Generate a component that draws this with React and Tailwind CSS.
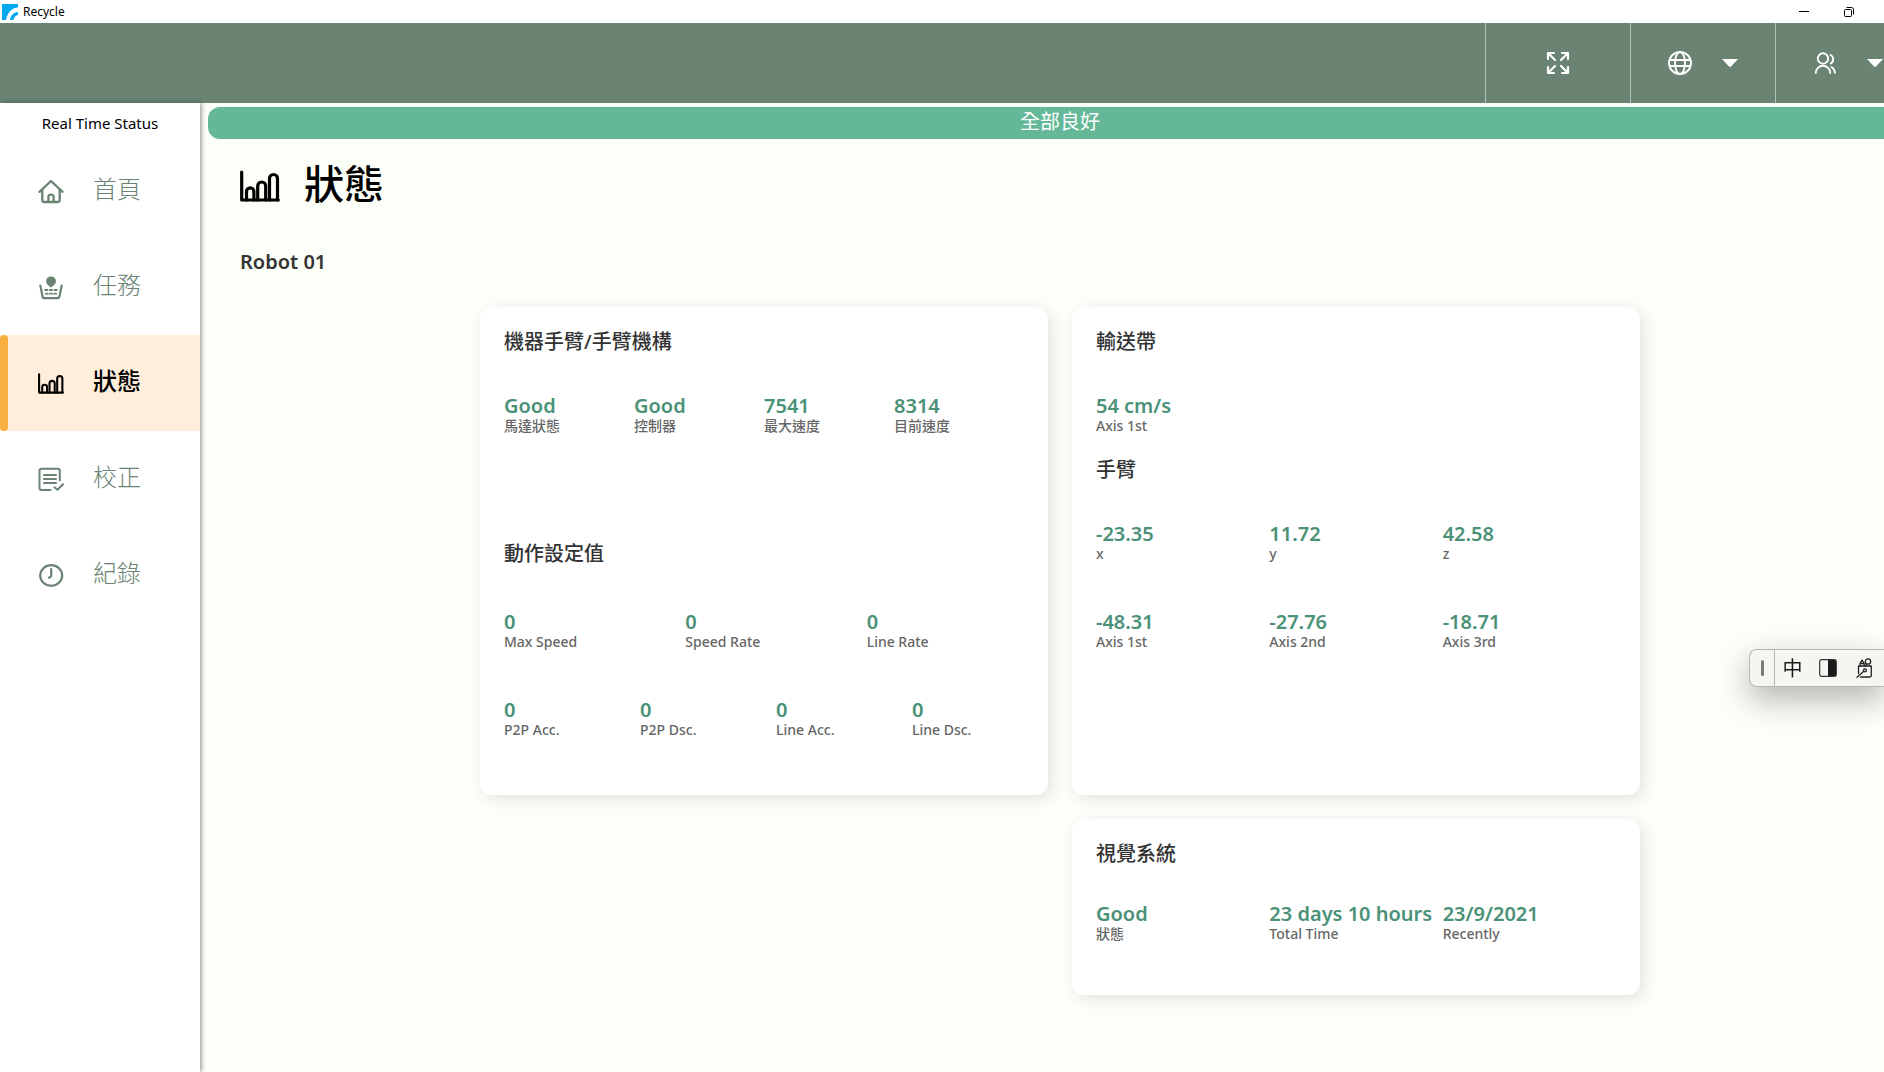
import React from "react";

const NAV = [
  { label: "首頁", icon: HomeIcon },
  { label: "任務", icon: TaskIcon },
  { label: "狀態", icon: ChartIcon, active: true },
  { label: "校正", icon: CalibrateIcon },
  { label: "紀錄", icon: ClockIcon },
];

function HomeIcon() {
  return (
    <svg viewBox="0 0 26 26" className="size-[26px]" fill="none" stroke="currentColor" strokeWidth="2.3" strokeLinecap="round" strokeLinejoin="round" aria-hidden="true">
      <path d="M1.500 13.800 13 3l11.500 10.800" />
      <path d="M4.300 12v10a2 2 0 0 0 2 2h13.400a2 2 0 0 0 2-2V12" />
      <path d="M10.400 23.500v-4.300a2.600 2.600 0 0 1 5.200 0V23.500" />
    </svg>
  );
}

function TaskIcon() {
  return (
    <svg viewBox="0 0 26 26" className="size-[26px]" fill="none" stroke="currentColor" strokeWidth="2.200" strokeLinecap="round" strokeLinejoin="round" aria-hidden="true">
      <path d="M2.300 11.500 4.600 22.500a2 2 0 0 0 2 1.700h12.800a2 2 0 0 0 2-1.700l2.300-11" />
      <path d="M13 13.800c-1.500-2-4.900-3.200-4.900-6.500a4.900 4.900 0 0 1 9.800 0c0 3.300-3.400 4.500-4.900 6.500z" fill="currentColor" stroke="none" />
      <path d="M7.200 16h2.300M11.900 16h2.200M16.500 16h2.300M7.800 19.700h2M12 19.700h2M16.200 19.700h2" strokeWidth="1.800" />
    </svg>
  );
}

function ChartIcon({ large = false }) {
  return (
    <svg viewBox="0 0 40 32" className={large ? "mt-1 h-8 w-10" : "h-[21px] w-[26px]"} fill="none" stroke="currentColor" strokeWidth="3.200" strokeLinecap="round" strokeLinejoin="round" aria-hidden="true">
      <path d="M1.700 2V30H38.300" />
      <path d="M6.500 30v-8.500a3.700 3.700 0 0 1 7.400 0V30" />
      <path d="M17.700 30V16a4 4 0 0 1 8 0V30" />
      <path d="M29.500 30V8.500a4 4 0 0 1 8 0V30" />
    </svg>
  );
}

function CalibrateIcon() {
  return (
    <svg viewBox="0 0 26 26" className="size-[26px]" fill="none" stroke="currentColor" strokeWidth="2" strokeLinecap="round" strokeLinejoin="round" aria-hidden="true">
      <path d="M12.500 24H3.500a2 2 0 0 1-2-2V4.700a2 2 0 0 1 2-2h16.300a2 2 0 0 1 2 2v9.500" />
      <path d="M6 9h12M6 13h12M6 17h12" strokeWidth="2.100" />
      <path d="m16.500 21.300 3 2.500 5.500-5.500" />
    </svg>
  );
}

function ClockIcon() {
  return (
    <svg viewBox="0 0 26 26" className="size-[26px]" fill="none" stroke="currentColor" strokeWidth="2.200" strokeLinecap="round" strokeLinejoin="round" aria-hidden="true">
      <ellipse cx="13.200" cy="13.500" rx="11" ry="10.300" />
      <path d="M13.200 7v6.500c0 1-1 1.800-2.400 2.200" />
    </svg>
  );
}

function ExpandIcon() {
  return (
    <svg viewBox="0 0 24 24" className="size-6" fill="none" stroke="currentColor" strokeWidth="2.200" strokeLinecap="round" strokeLinejoin="round" aria-hidden="true">
      <path d="M2 8V2h6M2.500 2.500 9 9M16 2h6v6M21.500 2.500 15 9M2 16v6h6M2.500 21.500 9 15M22 16v6h-6M21.500 21.500 15 15" />
    </svg>
  );
}

function GlobeIcon() {
  return (
    <svg viewBox="0 0 24 24" className="size-6" fill="none" stroke="currentColor" strokeWidth="1.900" aria-hidden="true">
      <circle cx="12" cy="12" r="11" />
      <ellipse cx="12" cy="12" rx="5" ry="11" />
      <path d="M1.500 9h21M1.500 15h21" />
    </svg>
  );
}

function UsersIcon() {
  return (
    <svg viewBox="0 0 24 24" className="size-6" fill="none" stroke="currentColor" strokeWidth="1.900" strokeLinecap="round" aria-hidden="true">
      <circle cx="10" cy="7.500" r="5.200" />
      <path d="M2.800 22a7.200 7.200 0 0 1 14.400 0M17.500 4a4.800 4.800 0 0 1 .2 8.500M18.500 16c1.900 1.200 3.200 3.200 3.400 5.800" />
    </svg>
  );
}

function Caret() {
  return (
    <svg viewBox="0 0 16 8" className="h-2 w-4" fill="currentColor" aria-hidden="true">
      <path d="M0 0h16L9 7.500q-1 .8-2 0z" />
    </svg>
  );
}

function Stat({ value, label }) {
  return (
    <div className="flex flex-col whitespace-nowrap">
      <dd className="text-xl leading-6 font-semibold text-[#4a9178]">{value}</dd>
      <dt className="order-last text-sm leading-4 font-medium text-[#666666]">{label}</dt>
    </div>
  );
}

function Card({ className = "", children }) {
  return (
    <section className={"rounded-xl bg-white px-6 pt-[23px] shadow-[4px_4px_16px_rgba(0,0,0,0.1)] " + className}>
      {children}
    </section>
  );
}

function CardTitle({ children }) {
  return <h3 className="text-xl leading-6 font-medium text-[#333333]">{children}</h3>;
}

function TitleBar() {
  return (
    <div className="flex h-[23px] items-center bg-white">
      <svg viewBox="0 0 16 16" className="ml-[2px] size-4" aria-hidden="true">
        <path fill="#00a8f0" d="M0 0h16v3.500C9.500 4 5.500 8.500 4 16H0z" />
        <path fill="#00a8f0" d="M8 16c.6-4.500 3.500-7.500 8-8v3c-2.500.4-4 2.200-4.500 5z" />
      </svg>
      <span className="ml-[5px] grow text-xs leading-4 text-black">Recycle</span>
      <button type="button" aria-label="Minimize" className="flex h-full w-[45px] items-center justify-center">
        <span className="h-px w-[10px] bg-black" />
      </button>
      <button type="button" aria-label="Restore" className="mr-[49px] flex h-full w-[45px] items-center justify-center">
        <svg viewBox="0 0 10 10" className="size-[10px]" fill="none" stroke="black" aria-hidden="true">
          <rect x="0.500" y="2.500" width="7" height="7" rx="1" />
          <path d="M2.500.5H7.500a2 2 0 0 1 2 2V7.500" />
        </svg>
      </button>
    </div>
  );
}

function Header() {
  const cell = "flex h-20 w-[145px] items-center border-l border-white/50 text-white";
  return (
    <header className="flex justify-end bg-[#6a8373]">
      <button type="button" aria-label="Full screen" className={cell + " justify-center"}>
        <ExpandIcon />
      </button>
      <button type="button" aria-label="Language" className={cell + " gap-[30px] pl-[37px]"}>
        <GlobeIcon />
        <Caret />
      </button>
      <button type="button" aria-label="Account" className={cell + " gap-[30px] pl-[37px]"}>
        <UsersIcon />
        <Caret />
      </button>
    </header>
  );
}

function Sidebar() {
  return (
    <aside className="z-10 w-[200px] shrink-0 bg-white shadow-[2px_0_4px_rgba(0,0,0,0.35)]">
      <p className="text-center text-[15px] leading-10 text-black">Real Time Status</p>
      <nav>
        {NAV.map(({ label, icon: Icon, active }) => (
          <a
            key={label}
            href="#"
            aria-current={active ? "page" : undefined}
            className={
              "flex h-24 items-center text-2xl " +
              (active ? "bg-[#ffeedc] font-medium text-black" : "font-light text-[#6a8373]")
            }
          >
            <span className={"mr-[30px] h-full w-2 rounded-lg " + (active ? "bg-[#f9ae40]" : "")} />
            <Icon />
            <span className="ml-[29px] pb-1 leading-8">{label}</span>
          </a>
        ))}
      </nav>
    </aside>
  );
}

function InputBar() {
  return (
    <div className="fixed top-[649px] right-0 flex h-[38px] w-[135px] items-center rounded-l-lg border border-r-0 border-[#b4b6b2] bg-[#f5f6f2] shadow-[0_12px_32px_rgba(0,0,0,0.3)]">
      <span className="flex h-full w-[25px] items-center justify-center border-r border-[#b4b6b2]">
        <span className="h-4 w-[3px] rounded-full bg-[#7a7a7a]" />
      </span>
      <button type="button" className="w-[35px] pt-[2px] text-center text-xl leading-6 text-[#1b1b1b]">中</button>
      <button type="button" aria-label="Half width" className="flex w-9 justify-center">
        <svg viewBox="0 0 18 18" className="size-[18px]" aria-hidden="true">
          <rect x="0.700" y="0.700" width="16.600" height="16.600" rx="2" fill="none" stroke="#333" strokeWidth="1.200" />
          <path d="M9 1h6.500A1.500 1.500 0 0 1 17 2.500v13a1.500 1.500 0 0 1-1.500 1.500H9z" fill="#1b1b1b" />
        </svg>
      </button>
      <button type="button" aria-label="Input tools" className="flex w-9 justify-center">
        <svg viewBox="0 0 16 20" className="h-5 w-4" fill="none" stroke="#222" strokeWidth="1.300" strokeLinejoin="round" strokeLinecap="round" aria-hidden="true">
          <path d="M2.500 15.500V8h12.800v9.500a1.500 1.500 0 0 1-1.500 1.500H4.500" />
          <path d="M4 8V5.500L6 2l2.200 3.500V8M4.200 5.500H8" />
          <circle cx="12" cy="3.500" r="2.700" />
          <path d="M10.500 6 9.800 8M1 19.300l6.800-6" />
          <circle cx="9" cy="12.300" r="1.500" />
        </svg>
      </button>
    </div>
  );
}

export default function App() {
  return (
    <div className="min-h-screen overflow-hidden bg-[#fbfff7] font-['Noto_Sans','Noto_Sans_CJK_TC',sans-serif]">
      <div className="-mr-9 flex min-h-screen flex-col">
        <TitleBar />
        <Header />
        <div className="flex grow">
          <Sidebar />
          <main className="grow px-2 pt-1">
            <p className="h-8 rounded-xl bg-[#64b898] text-center text-xl leading-[30px] text-white">全部良好</p>
            <h1 className="mt-[15px] flex items-center gap-6 pl-8 text-[40px] leading-[60px] font-medium text-black">
              <ChartIcon large />
              狀態
            </h1>
            <h2 className="mt-8 pl-8 text-xl leading-8 font-semibold text-[#333333]">Robot 01</h2>
            <div className="mx-auto mt-[29px] grid max-w-[1160px] grid-cols-2 gap-6">
              <Card className="min-h-[488px]">
                <CardTitle>機器手臂/手臂機構</CardTitle>
                <dl className="mt-10 grid h-[124px] grid-cols-4">
                  <Stat value="Good" label="馬達狀態" />
                  <Stat value="Good" label="控制器" />
                  <Stat value="7541" label="最大速度" />
                  <Stat value="8314" label="目前速度" />
                </dl>
                <div className="mt-6 -mr-6">
                  <CardTitle>動作設定值</CardTitle>
                  <dl className="mt-11 grid h-22 grid-cols-3">
                    <Stat value="0" label="Max Speed" />
                    <Stat value="0" label="Speed Rate" />
                    <Stat value="0" label="Line Rate" />
                  </dl>
                  <dl className="grid grid-cols-4">
                    <Stat value="0" label="P2P Acc." />
                    <Stat value="0" label="P2P Dsc." />
                    <Stat value="0" label="Line Acc." />
                    <Stat value="0" label="Line Dsc." />
                  </dl>
                </div>
              </Card>
              <Card>
                <CardTitle>輸送帶</CardTitle>
                <dl className="mt-10 grid h-16 grid-cols-3">
                  <Stat value="54 cm/s" label="Axis 1st" />
                </dl>
                <CardTitle>手臂</CardTitle>
                <dl className="mt-10 grid auto-rows-[88px] grid-cols-3">
                  <Stat value="-23.35" label="x" />
                  <Stat value="11.72" label="y" />
                  <Stat value="42.58" label="z" />
                  <Stat value="-48.31" label="Axis 1st" />
                  <Stat value="-27.76" label="Axis 2nd" />
                  <Stat value="-18.71" label="Axis 3rd" />
                </dl>
              </Card>
              <Card className="col-start-2 min-h-44">
                <CardTitle>視覺系統</CardTitle>
                <dl className="mt-9 grid grid-cols-3">
                  <Stat value="Good" label="狀態" />
                  <Stat value="23 days 10 hours" label="Total Time" />
                  <Stat value="23/9/2021" label="Recently" />
                </dl>
              </Card>
            </div>
          </main>
        </div>
      </div>
      <InputBar />
    </div>
  );
}
